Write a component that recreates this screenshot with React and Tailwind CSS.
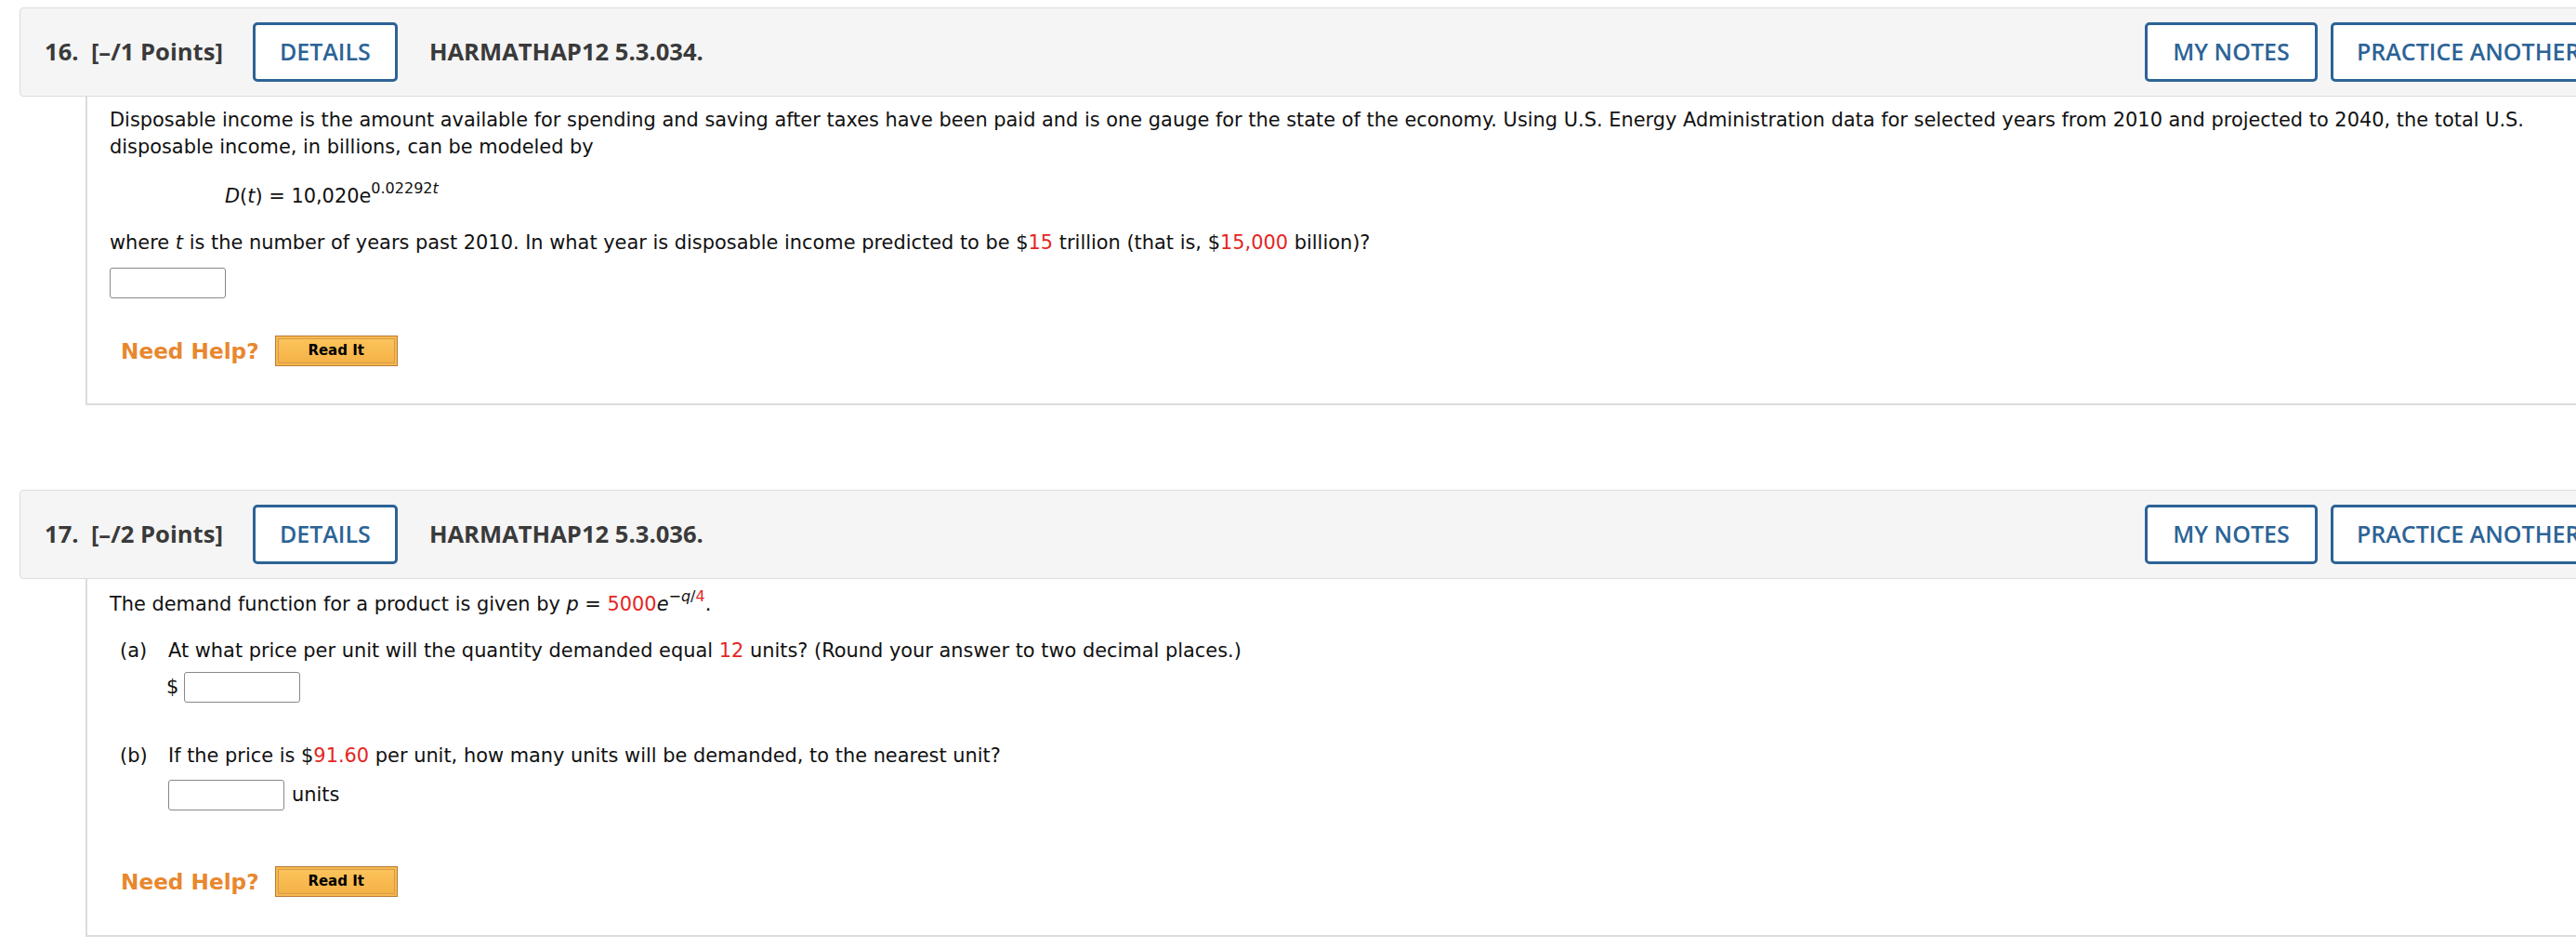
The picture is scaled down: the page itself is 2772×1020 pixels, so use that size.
import React from "react";

const body = { fontFamily: '"DejaVu Sans", Verdana, sans-serif' };
const head = { fontFamily: '"Open Sans", sans-serif' };

function Header({ num, pts, code }) {
  return (
    <div className="flex h-[96px] w-[3000px] items-center rounded-l-[4px] border border-[#dcdcdc] bg-[#f5f5f5]" style={head}>
      <div className="flex w-[2286px] shrink-0 items-center pl-[26px]">
        <span className="text-[25.6px] font-bold text-[#3a3a3a]">{num}.&nbsp; [–/{pts} Points]</span>
        <button className="ml-[32px] flex h-[64px] w-[156px] items-center justify-center rounded-[5px] border-[3px] border-[#2c6396] bg-white text-[25px] font-semibold text-[#2c6396]">DETAILS</button>
        <span className="ml-[34px] text-[25.6px] font-bold text-[#3a3a3a]">{code}</span>
      </div>
      <button className="flex h-[64px] w-[186px] items-center justify-center rounded-[5px] border-[3px] border-[#2c6396] bg-white text-[25px] font-semibold text-[#2c6396]">MY NOTES</button>
      <button className="ml-[14px] flex h-[64px] items-center rounded-[5px] border-[3px] border-[#2c6396] bg-white pl-[25px] pr-[27px] text-[25px] font-semibold text-[#2c6396]">PRACTICE ANOTHER</button>
    </div>
  );
}

function Help() {
  return (
    <div className="flex items-center" style={body}>
      <span className="ml-[12px] text-[23.2px] font-bold text-[#e8872e]">Need Help?</span>
      <div className="ml-[17px] border border-[#b87a3a] bg-[#f7b94d] p-[2px]">
        <div className="flex h-[27px] w-[126px] items-center justify-center border border-[#d59a4e] bg-gradient-to-b from-[#fcc35b] to-[#f4b246] text-[15px] font-bold text-black">Read It</div>
      </div>
    </div>
  );
}

const Red = ({ children }) => <span className="text-[#e4261f]">{children}</span>;

export default function App() {
  return (
    <div className="h-[1020px] w-[2772px] overflow-hidden bg-white pl-[21px] pt-[8px]">
      <Header num="16" pts="1" code="HARMATHAP12 5.3.034." />
      <div className="ml-[71px] h-[332px] w-[3000px] border-b-2 border-l-2 border-[#dcdcdc] pl-[24px] pt-[11px] text-[20.9px] leading-[29px] text-[#111]" style={body}>
        <p className="w-[2620px]">Disposable income is the amount available for spending and saving after taxes have been paid and is one gauge for the state of the economy. Using U.S. Energy Administration data for selected years from 2010 and projected to 2040, the total U.S. disposable income, in billions, can be modeled by</p>
        <p className="ml-[124px] mt-[24px]">
          <i>D</i>(<i>t</i>) = 10,020e<sup className="relative top-[-10px] text-[16px]">0.02292<i>t</i></sup>
        </p>
        <p className="mt-[21px]">where <i>t</i> is the number of years past 2010. In what year is disposable income predicted to be $<Red>15</Red> trillion (that is, $<Red>15,000</Red> billion)?</p>
        <div className="mt-[12px] h-[33px] w-[125px] rounded-[3px] border border-[#888]"></div>
        <div className="mt-[40px]"><Help /></div>
      </div>
      <div className="h-[91px]"></div>
      <Header num="17" pts="2" code="HARMATHAP12 5.3.036." />
      <div className="ml-[71px] h-[385px] w-[3000px] border-b-2 border-l-2 border-[#dcdcdc] pl-[24px] pt-[13px] text-[20.9px] leading-[29px] text-[#111]" style={body}>
        <p>The demand function for a product is given by <i>p</i> = <Red>5000</Red><i>e</i><sup className="relative top-[-10px] text-[16px]">−<i>q</i>/<Red>4</Red></sup>.</p>
        <div className="mt-[21px] flex">
          <span className="ml-[11px] w-[52px]">(a)</span>
          <span>At what price per unit will the quantity demanded equal <Red>12</Red> units? (Round your answer to two decimal places.)</span>
        </div>
        <div className="ml-[61px] mt-[8px] flex items-center">
          <span>$</span>
          <div className="ml-[6px] h-[33px] w-[125px] rounded-[3px] border border-[#888]"></div>
        </div>
        <div className="mt-[43px] flex">
          <span className="ml-[11px] w-[52px]">(b)</span>
          <span>If the price is $<Red>91.60</Red> per unit, how many units will be demanded, to the nearest unit?</span>
        </div>
        <div className="ml-[63px] mt-[11px] flex items-center">
          <div className="h-[33px] w-[125px] rounded-[3px] border border-[#888]"></div>
          <span className="ml-[8px]">units</span>
        </div>
        <div className="mt-[60px]"><Help /></div>
      </div>
    </div>
  );
}
